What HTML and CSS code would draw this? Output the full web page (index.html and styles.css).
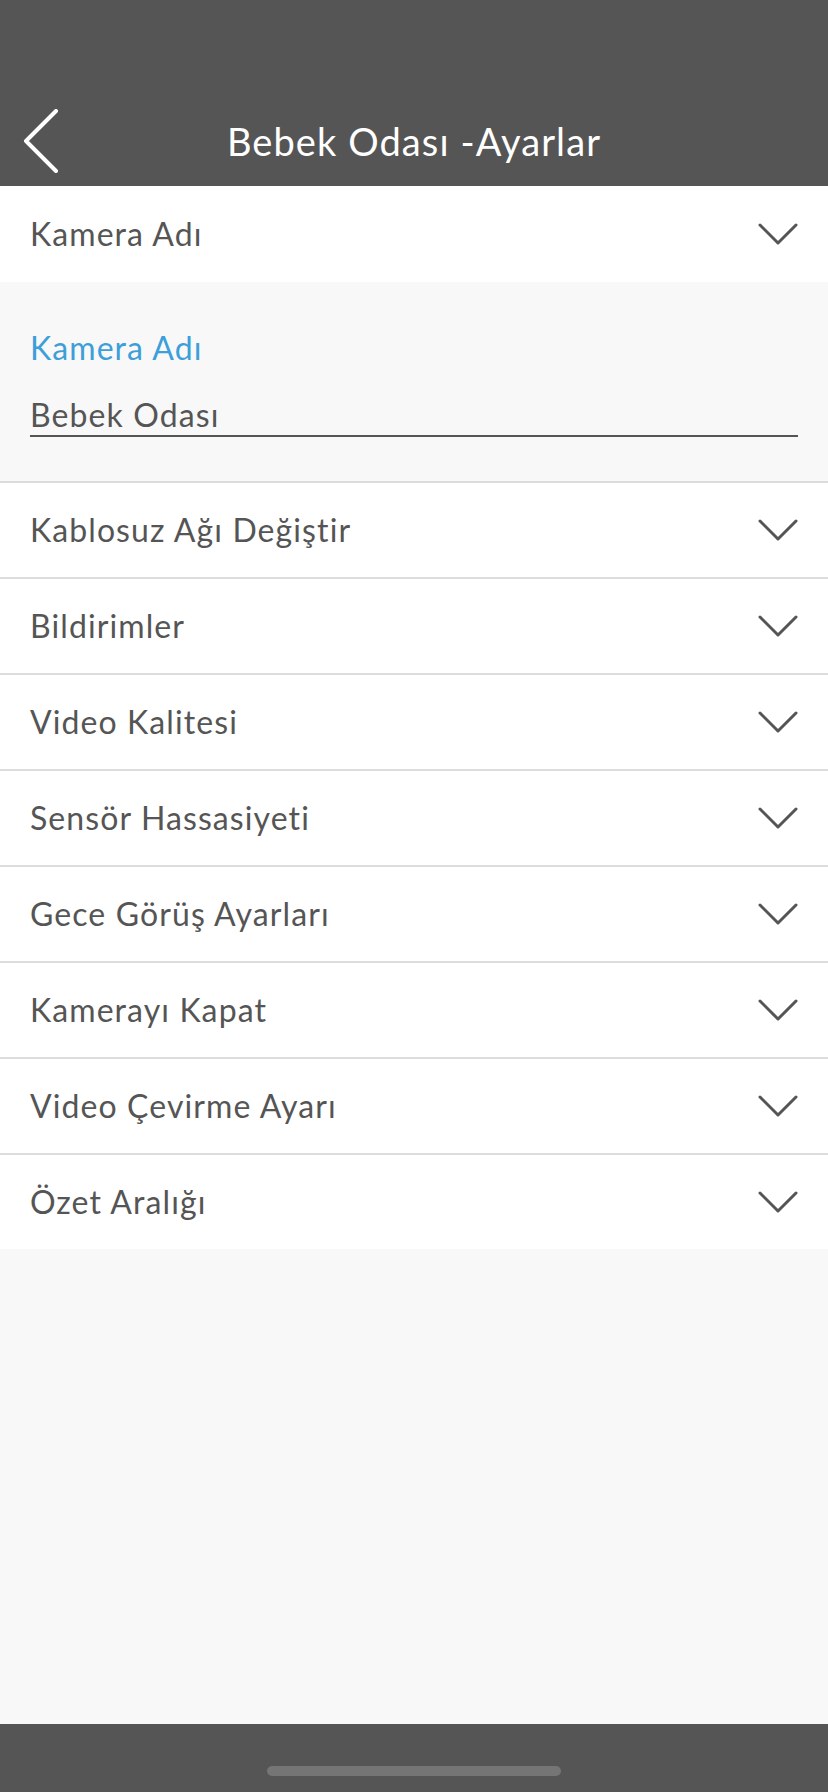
FILE: index.html
```html
<!DOCTYPE html>
<html lang="tr">
<head>
<meta charset="utf-8">
<title>Bebek Odası -Ayarlar</title>
<link rel="stylesheet" href="styles.css">
</head>
<body>
<div class="screen">
  <header class="header">
    <div class="nav">
      <div class="nav-left">
        <svg class="back" width="36" height="64" viewBox="0 0 36 64"><path d="M33 2 L3 32 L33 62" fill="none" stroke="#fff" stroke-width="4" stroke-linecap="round" stroke-linejoin="round"/></svg>
      </div>
      <h1 class="title">Bebek Odası -Ayarlar</h1>
      <div class="nav-right"></div>
    </div>
  </header>
  <main class="list">
    <div class="row first"><span class="row-label">Kamera Adı</span><svg class="chev" width="40" height="22" viewBox="0 0 40 22"><path d="M2 2 L20 20 L38 2" fill="none" stroke="#555" stroke-width="3" stroke-linecap="round" stroke-linejoin="round"/></svg></div>
    <div class="panel">
      <div class="field-label">Kamera Adı</div>
      <div class="field-value">Bebek Odası</div>
    </div>
    <div class="row"><span class="row-label">Kablosuz Ağı Değiştir</span><svg class="chev" width="40" height="22" viewBox="0 0 40 22"><path d="M2 2 L20 20 L38 2" fill="none" stroke="#555" stroke-width="3" stroke-linecap="round" stroke-linejoin="round"/></svg></div>
    <div class="row"><span class="row-label">Bildirimler</span><svg class="chev" width="40" height="22" viewBox="0 0 40 22"><path d="M2 2 L20 20 L38 2" fill="none" stroke="#555" stroke-width="3" stroke-linecap="round" stroke-linejoin="round"/></svg></div>
    <div class="row"><span class="row-label">Video Kalitesi</span><svg class="chev" width="40" height="22" viewBox="0 0 40 22"><path d="M2 2 L20 20 L38 2" fill="none" stroke="#555" stroke-width="3" stroke-linecap="round" stroke-linejoin="round"/></svg></div>
    <div class="row"><span class="row-label">Sensör Hassasiyeti</span><svg class="chev" width="40" height="22" viewBox="0 0 40 22"><path d="M2 2 L20 20 L38 2" fill="none" stroke="#555" stroke-width="3" stroke-linecap="round" stroke-linejoin="round"/></svg></div>
    <div class="row"><span class="row-label">Gece Görüş Ayarları</span><svg class="chev" width="40" height="22" viewBox="0 0 40 22"><path d="M2 2 L20 20 L38 2" fill="none" stroke="#555" stroke-width="3" stroke-linecap="round" stroke-linejoin="round"/></svg></div>
    <div class="row"><span class="row-label">Kamerayı Kapat</span><svg class="chev" width="40" height="22" viewBox="0 0 40 22"><path d="M2 2 L20 20 L38 2" fill="none" stroke="#555" stroke-width="3" stroke-linecap="round" stroke-linejoin="round"/></svg></div>
    <div class="row"><span class="row-label">Video Çevirme Ayarı</span><svg class="chev" width="40" height="22" viewBox="0 0 40 22"><path d="M2 2 L20 20 L38 2" fill="none" stroke="#555" stroke-width="3" stroke-linecap="round" stroke-linejoin="round"/></svg></div>
    <div class="row"><span class="row-label">Özet Aralığı</span><svg class="chev" width="40" height="22" viewBox="0 0 40 22"><path d="M2 2 L20 20 L38 2" fill="none" stroke="#555" stroke-width="3" stroke-linecap="round" stroke-linejoin="round"/></svg></div>
  </main>
  <div class="spacer"></div>
  <footer class="bottom-bar"><div class="home-indicator"></div></footer>
</div>
</body>
</html>
```
FILE: styles.css
```css
* { box-sizing: border-box; }
html, body { margin: 0; padding: 0; }
body {
  background: #f8f8f8;
  font-family: Lato, "Open Sans", "Liberation Sans", sans-serif;
  color: #555555;
}
.screen {
  width: 828px;
  height: 1792px;
  display: flex;
  flex-direction: column;
  background: #f8f8f8;
}
.header {
  height: 186px;
  background: #555555;
  display: flex;
  align-items: flex-end;
  flex-shrink: 0;
}
.nav {
  width: 100%;
  height: 90px;
  display: grid;
  grid-template-columns: 1fr auto 1fr;
  align-items: center;
}
.nav-left {
  padding-left: 23px;
  display: flex;
  align-items: center;
}
.back { display: block; }
.title {
  margin: 0;
  font-size: 38px;
  font-weight: 400;
  color: #ffffff;
  line-height: 44px;
  letter-spacing: 1.1px;
}
.list { flex-shrink: 0; }
.row {
  height: 96px;
  background: #ffffff;
  border-top: 2px solid #dcdcdc;
  display: flex;
  align-items: center;
  justify-content: space-between;
  padding: 0 30px 0 30px;
}
.row.first { border-top: none; }
.row-label {
  font-size: 32px;
  line-height: 40px;
  color: #555555;
  letter-spacing: 1.1px;
}
.chev { display: block; margin-right: 0; }
.panel {
  height: 199px;
  background: #f8f8f8;
  padding: 46px 30px 0 30px;
}
.field-label {
  font-size: 32px;
  line-height: 40px;
  color: #3d9fd9;
  letter-spacing: 1.1px;
}
.field-value {
  margin-top: 27px;
  font-size: 32px;
  line-height: 40px;
  color: #555555;
  letter-spacing: 1.1px;
  border-bottom: 2px solid #555555;
}
.spacer { flex: 1; }
.bottom-bar {
  height: 68px;
  background: #555555;
  display: flex;
  justify-content: center;
  flex-shrink: 0;
}
.home-indicator {
  margin-top: 42px;
  width: 294px;
  height: 10px;
  border-radius: 5px;
  background: #757575;
}
```
